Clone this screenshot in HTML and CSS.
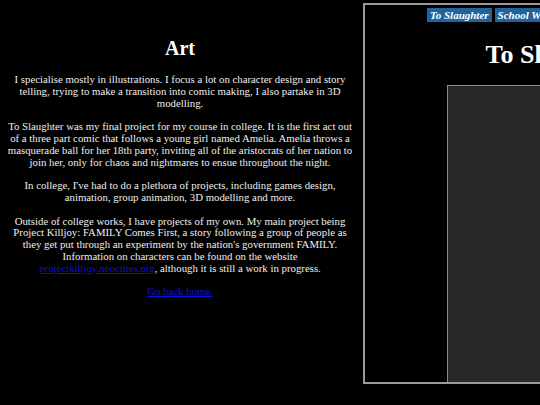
FILE: index.html
```html
<!DOCTYPE html>
<html lang="en">
<head>
    <meta charset="UTF-8">
    <meta name="viewport" content="width=device-width, initial-scale=1.0">
    <title>Art</title>
    <link rel="stylesheet" href="styles.css">
</head>
<body>

    <!-- Page: text on the left, gallery on the right -->
    <div class="page">
        <div class="about">
            <h1>Art</h1>

            <p>I specialise mostly in illustrations. I focus a lot on character design and story telling, trying to make a transition into comic making, I also partake in 3D modelling.</p>

            <p>To Slaughter was my final project for my course in college. It is the first act out of a three part comic that follows a young girl named Amelia. Amelia throws a masquerade ball for her 18th party, inviting all of the aristocrats of her nation to join her, only for chaos and nightmares to ensue throughout the night.</p>

            <p>In college, I've had to do a plethora of projects, including games design, animation, group animation, 3D modelling and more.</p>

            <p>Outside of college works, I have projects of my own. My main project being Project Killjoy: FAMILY Comes First, a story following a group of people as they get put through an experiment by the nation's government FAMILY. Information on characters can be found on the website <a href="#">projectkilljoy.neocities.org</a>, although it is still a work in progress.</p>

            <p><a href="#">Go back home.</a></p>
        </div>

        <!-- Gallery with tabs -->
        <div class="gallery">
            <div class="tabs">
                <button class="tab">To Slaughter</button>
                <button class="tab">School Work</button>
                <button class="tab">Personal</button>
                <button class="tab">Other</button>
            </div>
            <h1 class="gallery-title">To Slaughter</h1>
            <div class="viewer"></div>
        </div>
    </div>

</body>
</html>
```

FILE: styles.css
```css
/* General page styles */
body {
    margin: 0;
    background-color: #000;
    color: #eee;
    font-family: 'Liberation Serif', 'Times New Roman', serif;
    font-size: 10.8px;
    overflow: hidden;
}

/* Two columns side by side */
.page {
    display: flex;
    align-items: flex-start;
    gap: 10px;
    padding: 3px 0 0 0;
}

/* Left column with the text */
.about {
    width: 346px;
    margin-left: 7px;
    flex-shrink: 0;
    text-align: center;
    line-height: 11.8px;
    padding-top: 34px;
}

.about h1 {
    font-size: 20px;
    line-height: 23px;
    margin: 0 0 14px;
    color: #fff;
}

.about p {
    margin: 0 0 11.8px;
}

a {
    color: #1010d8;
}

/* Right column, the gallery */
.gallery {
    width: 384px;
    height: 377px;
    flex-shrink: 0;
    border: 2px solid #9a9a9a;
    display: flex;
    flex-direction: column;
    align-items: center;
}

.tabs {
    display: flex;
    gap: 3px;
    margin-top: 3px;
    align-self: flex-start;
    margin-left: 62px;
}

.tab {
    background-color: #20649e;
    color: #fff;
    border: none;
    padding: 1px 3px;
    height: 14px;
    font-family: 'Liberation Serif', serif;
    font-style: italic;
    font-weight: bold;
    font-size: 11px;
    line-height: 12px;
}

.gallery-title {
    font-size: 26px;
    line-height: 30px;
    margin: 18px 0 0;
    color: #fff;
}

.viewer {
    align-self: flex-start;
    margin-left: 82px;
    margin-top: 15px;
    width: 246px;
    flex: 1;
    background-color: #282828;
    border-top: 1px solid #8a8a8a;
    border-left: 1px solid #8a8a8a;
    border-right: 1px solid #8a8a8a;
}
```
